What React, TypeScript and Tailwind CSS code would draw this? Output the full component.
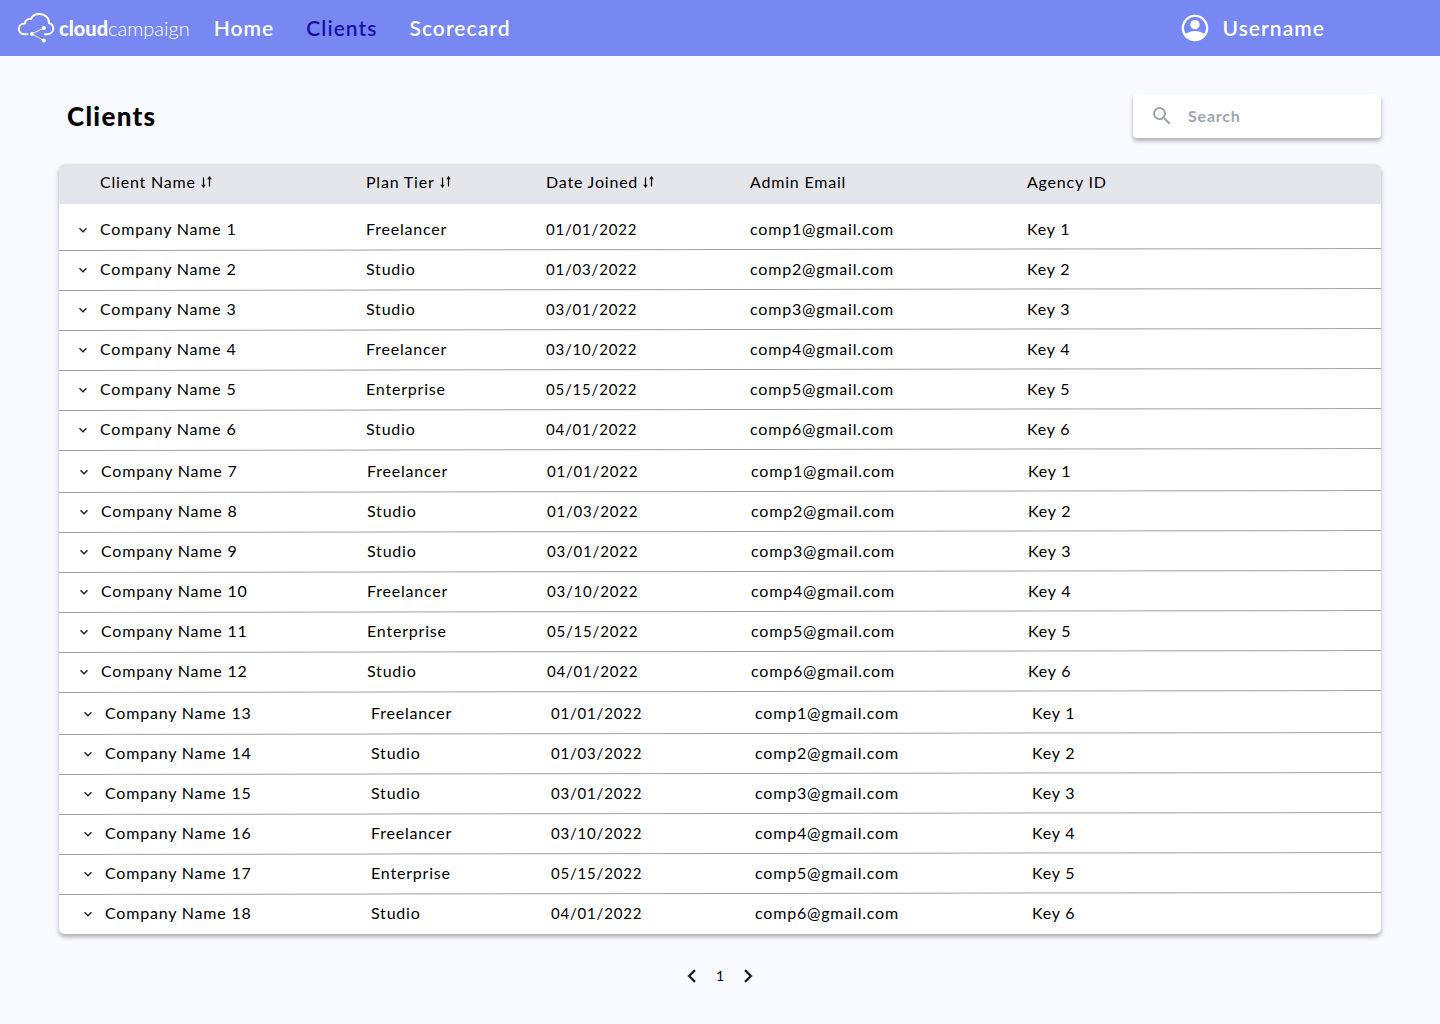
import React from 'react';

type Client = { name: string; tier: string; joined: string; email: string; key: string };

const details = [
  { tier: 'Freelancer', joined: '01/01/2022' },
  { tier: 'Studio', joined: '01/03/2022' },
  { tier: 'Studio', joined: '03/01/2022' },
  { tier: 'Freelancer', joined: '03/10/2022' },
  { tier: 'Enterprise', joined: '05/15/2022' },
  { tier: 'Studio', joined: '04/01/2022' },
];

const groups: Client[][] = [0, 1, 2].map((group) =>
  details.map((detail, index) => ({
    ...detail,
    name: `Company Name ${group * 6 + index + 1}`,
    email: `comp${index + 1}@gmail.com`,
    key: `Key ${index + 1}`,
  })),
);

const groupIndent = ['', '*:pl-px', '*:pl-[5px]'];
const groupLead = ['*:pt-[6px] h-[46px]', '*:pt-[2px] h-[42px]', '*:pt-[2px] h-[42px]'];

function Logo() {
  return (
    <a href="#" aria-label="cloudcampaign" className="flex items-center gap-1 text-white">
      <svg width="38" height="32" viewBox="0 0 38 32" fill="none" stroke="currentColor" aria-hidden="true">
        <path
          d="M10.500 22.200H7.600C4.200 22.200 1.800 19.900 1.800 16.900C1.800 13.700 4.300 11.500 7.900 11.400C8.300 8.200 10.700 6.500 14 7C15.700 3.600 18.800 2 22.700 2.100C28.400 2.300 32.200 6 32 11C34.700 11.800 36.300 13.900 36.300 16.600C36.300 19.900 33.700 22.200 30.300 22.200H28"
          strokeWidth="2"
          strokeLinecap="round"
          strokeLinejoin="round"
        />
        <path d="M26.800 16L15 21.900L26.800 28.500" strokeWidth="0.9" />
        <g fill="currentColor" stroke="none">
          <circle cx="26.800" cy="16" r="2.100" />
          <circle cx="15" cy="21.900" r="2" />
          <circle cx="26.800" cy="28.500" r="2.100" />
        </g>
      </svg>
      <span className="text-xl leading-6">
        <span className="font-black">cloud</span>
        <span className="font-light">campaign</span>
      </span>
    </a>
  );
}

function SortIcon() {
  return (
    <svg width="13" height="14" viewBox="0 0 13 14" fill="none" stroke="currentColor" strokeWidth="1.2" aria-hidden="true">
      <path d="M3.500 2.500V12" />
      <path d="M9.500 11.500V2" />
      <path d="M1.300 9.800H5.700L3.500 13Z" fill="currentColor" stroke="none" />
      <path d="M7.300 4.200H11.700L9.500 1Z" fill="currentColor" stroke="none" />
    </svg>
  );
}

function Chevron({ turn, size }: { turn: string; size: number }) {
  return (
    <svg width={size} height={size} viewBox="0 0 12 12" fill="none" stroke="#1f2024" strokeWidth="1.4" className={turn} aria-hidden="true">
      <path d="M2.500 4.200L6 7.700L9.500 4.200" />
    </svg>
  );
}

function SortHeader({ label }: { label: string }) {
  return (
    <th scope="col" className="pb-[4px] font-normal">
      <button type="button" className="flex items-center gap-1 tracking-wider">
        {label}
        <SortIcon />
      </button>
    </th>
  );
}

export default function App() {
  return (
    <div className="min-h-screen bg-[#f9faff] font-['Lato',sans-serif] text-black">
      <header className="flex h-14 items-center bg-[#7788f2] pl-[17px] pr-[115px] text-white">
        <Logo />
        <nav className="ml-6 flex gap-8 text-[21px] font-semibold tracking-wider">
          <a href="#">Home</a>
          <a href="#" aria-current="page" className="text-[#1a0fa8]">Clients</a>
          <a href="#">Scorecard</a>
        </nav>
        <button type="button" className="ml-auto flex items-center gap-3 text-[21px] font-semibold tracking-wider">
          <svg width="32" height="32" viewBox="0 0 24 24" fill="currentColor" aria-hidden="true">
            <path d="M12 2C6.480 2 2 6.480 2 12s4.480 10 10 10 10-4.480 10-10S17.520 2 12 2zM12 3.800a8.200 8.200 0 0 1 6.900 12.600C17.300 15.200 14 14.300 12 14.300s-5.300 .9-6.900 2.100A8.200 8.200 0 0 1 12 3.800z" fillRule="evenodd" />
            <circle cx="12" cy="9.500" r="3.500" />
          </svg>
          Username
        </button>
      </header>

      <main className="px-[59px] pt-[38px]">
        <div className="flex items-center justify-between pl-2">
          <h1 className="text-[26px] leading-8 font-black tracking-wider">Clients</h1>
          <label className="flex h-11 w-[248px] items-center gap-3.5 rounded-[4px] bg-white pl-[17px] shadow-[0_3px_4px_rgba(0,0,0,0.3)]">
            <svg width="24" height="24" viewBox="0 0 24 24" fill="#9ca3af" aria-hidden="true" className="shrink-0">
              <path d="M15.500 14h-.790l-.280-.270A6.471 6.471 0 0 0 16 9.500 6.500 6.500 0 1 0 9.500 16c1.610 0 3.090-.590 4.230-1.570l.270.280v.790l5 4.990L20.490 19l-4.990-5zm-6 0C7.010 14 5 11.990 5 9.500S7.010 5 9.500 5 14 7.010 14 9.500 11.990 14 9.500 14z" />
            </svg>
            <input type="search" aria-label="Search" placeholder="Search" className="w-full min-w-0 bg-transparent text-base font-bold tracking-wider outline-none placeholder:text-[#a1a5b1]" />
          </label>
        </div>

        <div className="mt-[26px] overflow-hidden rounded-[6px] bg-white shadow-[0_3px_4px_rgba(0,0,0,0.3)]">
          <table className="w-full table-fixed text-left text-base leading-5 tracking-wider">
            <colgroup>
              <col className="w-[41px]" />
              <col className="w-[20.12%]" />
              <col className="w-[13.62%]" />
              <col className="w-[15.43%]" />
              <col className="w-[20.95%]" />
              <col />
            </colgroup>
            <thead className="bg-[#e5e6eb]">
              <tr className="h-10">
                <td />
                <SortHeader label="Client Name" />
                <SortHeader label="Plan Tier" />
                <SortHeader label="Date Joined" />
                <th scope="col" className="pb-[4px] font-normal">Admin Email</th>
                <th scope="col" className="pb-[4px] font-normal">Agency ID</th>
              </tr>
            </thead>
            {groups.map((clients, group) => (
              <tbody key={group} className="group">
                {clients.map((client, index) => (
                  <tr
                    key={client.name}
                    className={`group/row relative ${groupIndent[group]} ${index === 0 ? groupLead[group] : 'h-10'}`}
                  >
                    <td className="after:absolute after:inset-x-0 after:bottom-0 after:h-px after:rotate-[-0.08deg] after:bg-[#a0a0a0] group-last:group-last/row:after:hidden">
                      <button type="button" aria-label={`Expand ${client.name}`} className="ml-[18px] block">
                        <Chevron turn="" size={12} />
                      </button>
                    </td>
                    <td className="pb-[2px]">{client.name}</td>
                    <td className="pb-[2px]">{client.tier}</td>
                    <td className="pb-[2px] text-[15px]">{client.joined}</td>
                    <td className="pb-[2px]">{client.email}</td>
                    <td className="pb-[2px]">{client.key}</td>
                  </tr>
                ))}
              </tbody>
            ))}
          </table>
        </div>

        <nav aria-label="Pagination" className="mt-8 flex items-center justify-center gap-3.5 text-sm">
          <button type="button" aria-label="Previous page"><Chevron turn="rotate-90" size={20} /></button>
          <span>1</span>
          <button type="button" aria-label="Next page"><Chevron turn="-rotate-90" size={20} /></button>
        </nav>
      </main>
    </div>
  );
}
